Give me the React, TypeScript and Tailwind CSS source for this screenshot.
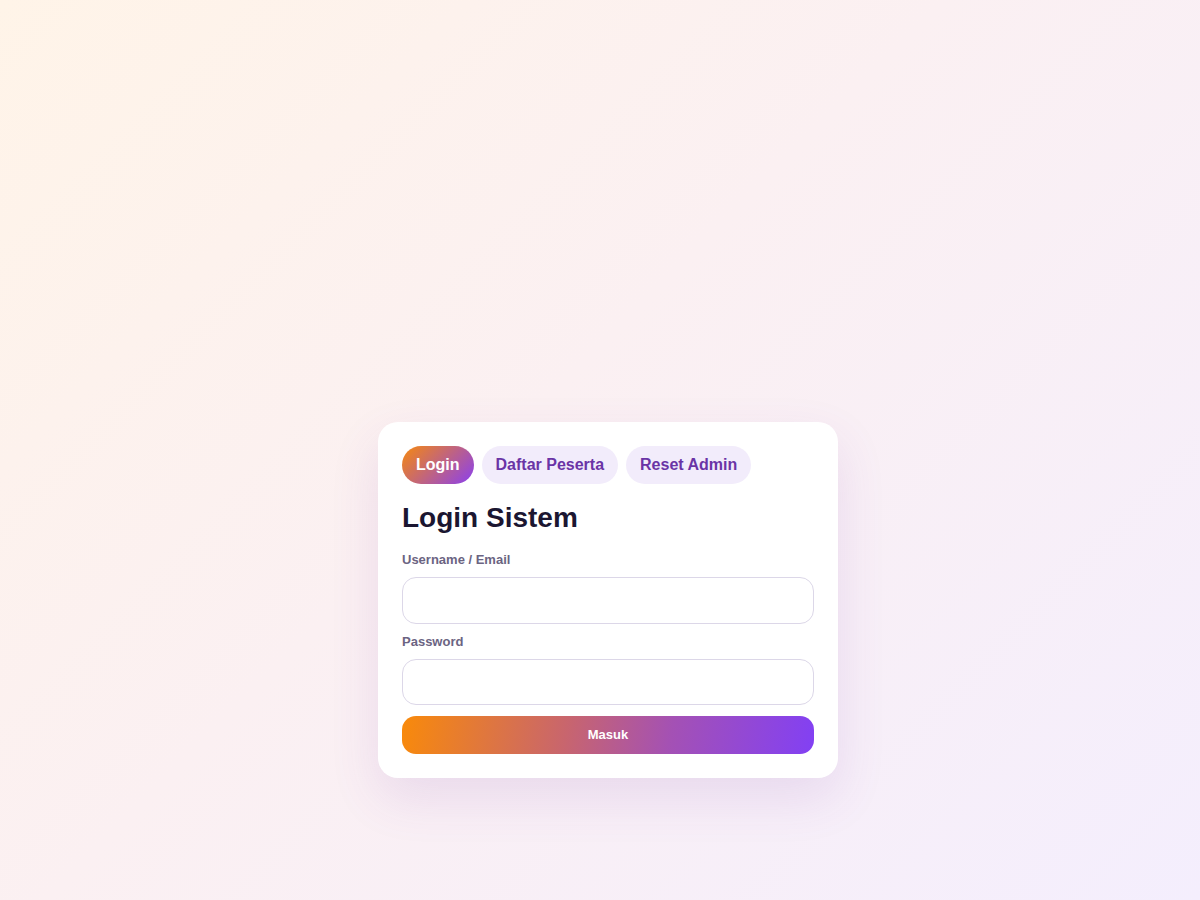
import React from "react";

export default function App() {
  return (
    <div className="min-h-screen w-full bg-[linear-gradient(135deg,#fff4e8_0%,#fbf0f2_45%,#f4eefd_100%)] pl-4 pt-[422px] font-['Liberation_Sans',Arial,sans-serif]">
      <div className="mx-auto w-[460px] rounded-[20px] bg-white p-6 shadow-[0_20px_50px_rgba(120,60,170,0.12)]">
        <div className="flex gap-2">
          <button className="h-[38px] rounded-full bg-[linear-gradient(135deg,#f6890e,#8a3ff0)] px-[14px] text-[16px] font-bold text-white">
            Login
          </button>
          <button className="h-[38px] rounded-full bg-[#f2ecfb] px-[14px] text-[16px] font-bold text-[#6a34a6]">
            Daftar Peserta
          </button>
          <button className="h-[38px] rounded-full bg-[#f2ecfb] px-[14px] text-[16px] font-bold text-[#6a34a6]">
            Reset Admin
          </button>
        </div>
        <h1 className="mt-[17px] text-[28px] font-bold leading-[34px] text-[#1b1631]">Login Sistem</h1>
        <div className="mt-[17px] flex flex-col">
          <label className="text-[13px] font-bold leading-[16px] text-[#6b6482]">Username / Email</label>
          <input className="mt-[9px] h-[46.5px] w-full rounded-[14px] border border-[#dcd7e8] bg-white px-3 outline-none" />
          <label className="mt-[10px] text-[13px] font-bold leading-[16px] text-[#6b6482]">Password</label>
          <input type="password" className="mt-[9px] h-[46.5px] w-full rounded-[14px] border border-[#dcd7e8] bg-white px-3 outline-none" />
          <button className="mt-[11px] h-[38px] w-full rounded-[14px] bg-[linear-gradient(100deg,#f98a0a_0%,#c8656e_40%,#a451b4_65%,#8240f4_100%)] text-[13px] font-bold text-white">
            Masuk
          </button>
        </div>
      </div>
    </div>
  );
}
